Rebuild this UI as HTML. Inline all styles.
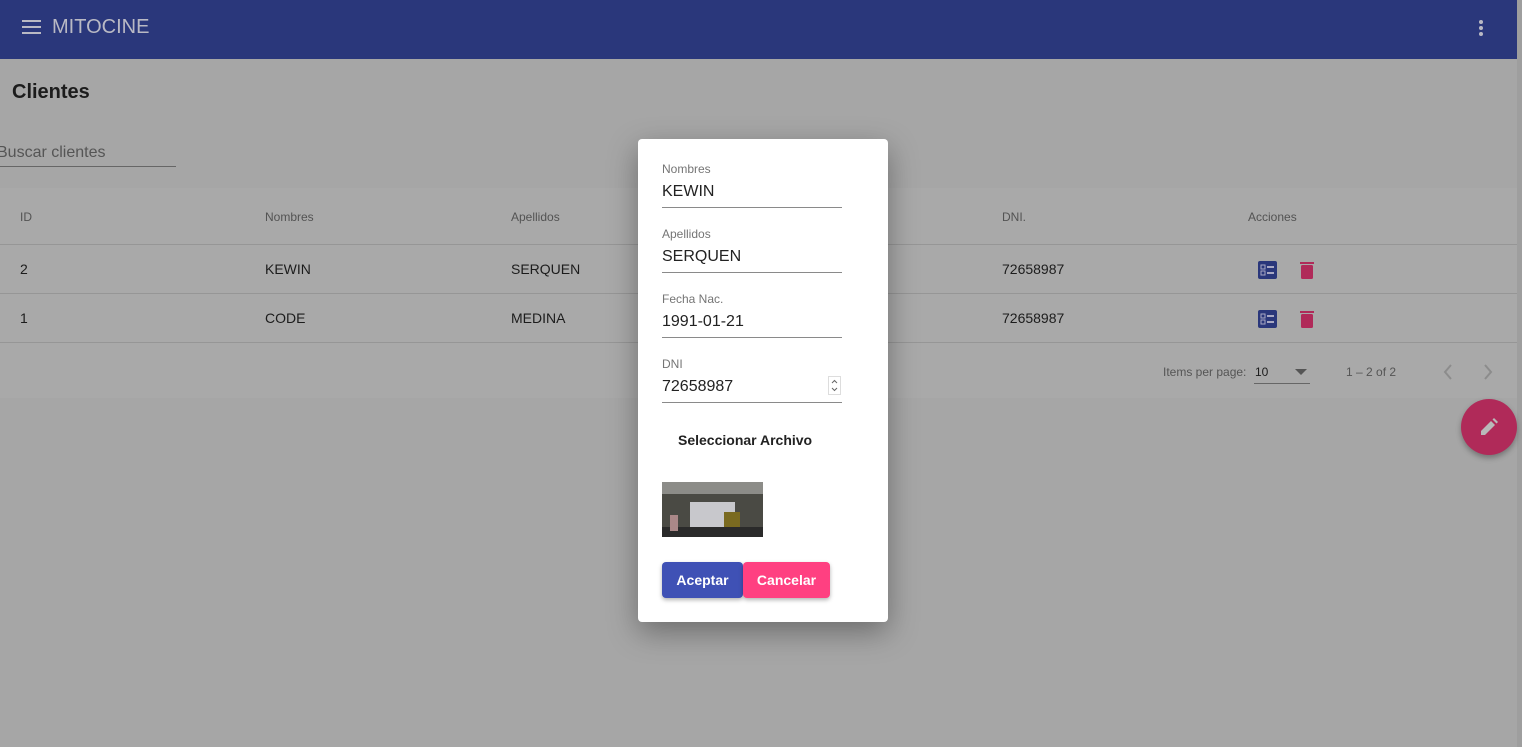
<!DOCTYPE html>
<html><head><style>
*{box-sizing:border-box;margin:0;padding:0}
body{width:1522px;height:747px;overflow:hidden;background:#a6a6a6;font-family:"Liberation Sans",sans-serif;position:relative}
.tb{position:absolute;left:0;top:0;width:1517px;height:59px;background:#2a377b;color:#b9b9c4}
.sb{position:absolute;right:0;top:0;width:5px;height:747px;background:#9e9e9e}
.abs{position:absolute}
.hdr{left:0;top:59px;width:1517px;height:64px;background:#a6a6a6}
.tbl{left:0;top:188px;width:1517px;height:210px;background:#a9a9a9}
.line{position:absolute;left:0;width:1517px;height:1px;background:#969696}
.th{position:absolute;font-size:12px;color:#535353;top:210px}
.td{position:absolute;font-size:14px;color:#1c1c1c}
.dlg{left:638px;top:139px;width:250px;height:483px;background:#fff;border-radius:4px;box-shadow:0 10px 30px rgba(0,0,0,.35)}
.lbl{position:absolute;left:24px;font-size:12px;color:#757575}
.val{position:absolute;left:24px;font-size:16px;color:#222}
.ul{position:absolute;left:24px;width:180px;height:1px;background:#8a8a8a}
.btn{position:absolute;top:423px;height:36px;border-radius:4px;color:#fff;font-size:14px;font-weight:bold;text-align:center;line-height:36px;box-shadow:0 2px 4px rgba(0,0,0,.3)}
</style></head><body>
<div class="tb">
<svg class="abs" style="left:22px;top:19px" width="20" height="16"><rect y="1" width="19" height="2" fill="#b9b9c4"/><rect y="7" width="19" height="2" fill="#b9b9c4"/><rect y="13" width="19" height="2" fill="#b9b9c4"/></svg>
<div class="abs" style="left:52px;top:16px;font-size:20px">MITOCINE</div>
<svg class="abs" style="left:1478px;top:19px" width="6" height="18"><circle cx="3" cy="3" r="2" fill="#b9b9c4"/><circle cx="3" cy="9" r="2" fill="#b9b9c4"/><circle cx="3" cy="15" r="2" fill="#b9b9c4"/></svg>
</div>
<div class="sb"></div>
<div class="abs hdr"></div>
<div class="abs" style="left:12px;top:81px;font-size:20px;font-weight:bold;color:#1c1c1c">Clientes</div>
<div class="abs" style="left:-3px;top:144px;font-size:16px;color:#555">Buscar clientes</div>
<div class="abs" style="left:0;top:166px;width:176px;height:1px;background:#666"></div>
<div class="abs tbl"></div>
<div class="th" style="left:20px">ID</div><div class="th" style="left:265px">Nombres</div><div class="th" style="left:511px">Apellidos</div><div class="th" style="left:1002px">DNI.</div><div class="th" style="left:1248px">Acciones</div>
<div class="line" style="top:244px"></div><div class="line" style="top:293px"></div><div class="line" style="top:342px"></div>
<div class="td" style="left:20px;top:261px">2</div><div class="td" style="left:265px;top:261px">KEWIN</div><div class="td" style="left:511px;top:261px">SERQUEN</div><div class="td" style="left:1002px;top:261px">72658987</div>
<div class="td" style="left:20px;top:310px">1</div><div class="td" style="left:265px;top:310px">CODE</div><div class="td" style="left:511px;top:310px">MEDINA</div><div class="td" style="left:1002px;top:310px">72658987</div>
<svg class="abs" style="left:1258px;top:261px" width="60" height="80">
<g><rect x="0" y="0" width="19" height="18" rx="2" fill="#2a377b"/><rect x="3" y="4" width="4" height="4" fill="none" stroke="#a9a9c4"/><rect x="3" y="10" width="4" height="4" fill="none" stroke="#a9a9c4"/><rect x="9" y="5" width="7" height="2" fill="#a9a9c4"/><rect x="9" y="11" width="7" height="2" fill="#a9a9c4"/>
<rect x="42" y="1" width="14" height="2" fill="#b02a59"/><rect x="43" y="4" width="12" height="14" rx="1.5" fill="#b02a59"/></g>
<g transform="translate(0,49)"><rect x="0" y="0" width="19" height="18" rx="2" fill="#2a377b"/><rect x="3" y="4" width="4" height="4" fill="none" stroke="#a9a9c4"/><rect x="3" y="10" width="4" height="4" fill="none" stroke="#a9a9c4"/><rect x="9" y="5" width="7" height="2" fill="#a9a9c4"/><rect x="9" y="11" width="7" height="2" fill="#a9a9c4"/>
<rect x="42" y="1" width="14" height="2" fill="#b02a59"/><rect x="43" y="4" width="12" height="14" rx="1.5" fill="#b02a59"/></g>
</svg>
<div class="abs" style="left:1163px;top:365px;font-size:12px;color:#555">Items per page:</div>
<div class="abs" style="left:1255px;top:365px;font-size:12px;color:#1c1c1c">10</div>
<svg class="abs" style="left:1295px;top:369px" width="12" height="6"><path d="M0 0L12 0L6 6Z" fill="#555"/></svg>
<div class="abs" style="left:1254px;top:383px;width:56px;height:1px;background:#666"></div>
<div class="abs" style="left:1346px;top:365px;font-size:12px;color:#555">1 – 2 of 2</div>
<svg class="abs" style="left:1440px;top:362px" width="60" height="20"><path d="M11 3L5 10L11 17" stroke="#8c8c8c" stroke-width="2" fill="none"/><path d="M45 3L51 10L45 17" stroke="#8c8c8c" stroke-width="2" fill="none"/></svg>
<div class="abs" style="left:1461px;top:399px;width:56px;height:56px;border-radius:50%;background:#b02a59;box-shadow:0 3px 6px rgba(0,0,0,.3)"></div>
<svg class="abs" style="left:1479px;top:417px" width="20" height="20"><path d="M2 18L2 14L12 4L16 8L6 18Z M13.5 2.5L15 1L19 5L17.5 6.5Z" fill="#b9b9b9"/></svg>
<div class="abs dlg">
<div class="lbl" style="top:23px">Nombres</div><div class="val" style="top:44px">KEWIN</div><div class="ul" style="top:68px"></div>
<div class="lbl" style="top:88px">Apellidos</div><div class="val" style="top:109px">SERQUEN</div><div class="ul" style="top:133px"></div>
<div class="lbl" style="top:153px">Fecha Nac.</div><div class="val" style="top:174px">1991-01-21</div><div class="ul" style="top:198px"></div>
<div class="lbl" style="top:218px">DNI</div><div class="val" style="top:239px">72658987</div><div class="ul" style="top:263px"></div>
<svg class="abs" style="left:190px;top:237px" width="14" height="20"><rect x="0.5" y="0.5" width="12" height="18" fill="none" stroke="#ddd"/><path d="M4 7L6.5 4.5L9 7M4 12L6.5 14.5L9 12" stroke="#666" fill="none"/></svg>
<div class="abs" style="left:40px;top:293px;font-size:14px;font-weight:bold;color:#222">Seleccionar Archivo</div>
<svg class="abs" style="left:24px;top:343px" width="101" height="55"><rect width="101" height="55" fill="#4a4a44"/><rect width="101" height="12" fill="#8c8c88"/><rect x="28" y="20" width="45" height="35" fill="#c8c8cc"/><rect x="62" y="30" width="16" height="25" fill="#7a6a20"/><rect x="0" y="45" width="101" height="10" fill="#2a2a2a"/><rect x="8" y="33" width="8" height="16" fill="#aa8888"/></svg>
<div class="btn" style="left:24px;width:81px;background:#3f51b5">Aceptar</div>
<div class="btn" style="left:105px;width:87px;background:#ff4081">Cancelar</div>
</div>
</body></html>
